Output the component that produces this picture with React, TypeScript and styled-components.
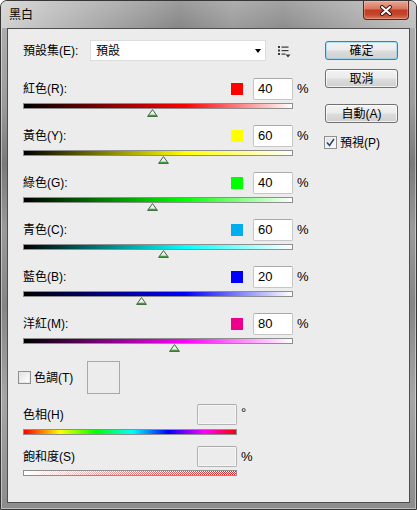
import React from 'react'
import styled, { createGlobalStyle } from 'styled-components'

const GlobalStyle = createGlobalStyle`
  html, body { margin: 0; padding: 0; }
  body {
    width: 417px;
    height: 510px;
    overflow: hidden;
    background: #ffffff;
    font-family: "Liberation Sans", "Noto Sans CJK TC", sans-serif;
  }
`

const FONT = `"Liberation Sans", "Noto Sans CJK TC", sans-serif`

const Window = styled.div`
  width: 417px;
  height: 510px;
  box-sizing: border-box;
  display: flex;
  flex-direction: column;
  padding: 0 6px 6px;
  border: 1px solid #363636;
  border-radius: 7px 7px 0 0;
  background: linear-gradient(to bottom, #b4b4b4 0%, #9c9c9c 20%, #7a7a7a 32%, #9a9a9a 45%, #858585 60%, #a6a6a6 78%, #8c8c8c 100%);
  box-shadow: inset 0 0 0 1px rgba(255, 255, 255, 0.45);
`

const TitleBar = styled.div`
  height: 27px;
  margin: 0 -6px;
  padding: 0 7px;
  display: flex;
  align-items: center;
  border-radius: 6px 6px 0 0;
  background:
    linear-gradient(to bottom, rgba(255, 255, 255, 0.18), rgba(255, 255, 255, 0)),
    linear-gradient(to right, #d2d2d2 0%, #bcbcbc 12%, #a2a2a2 28%, #878787 43%, #9c9c9c 56%, #8e8e8e 68%, #a9a9a9 85%, #c0c0c0 100%);
`

const Title = styled.span`
  font: 12px/14px ${FONT};
  color: #000;
  margin-left: 1px;
`

const CloseButton = styled.div`
  margin-left: auto;
  align-self: flex-start;
  width: 46px;
  height: 19px;
  box-sizing: border-box;
  border: 1px solid #5a2418;
  border-top: none;
  border-radius: 0 0 4px 4px;
  display: flex;
  align-items: center;
  justify-content: center;
  background: linear-gradient(to bottom, #e9a896 0%, #d9775f 42%, #c23c24 52%, #c5452d 75%, #d9785c 100%);
  box-shadow: inset 0 0 0 1px rgba(255, 210, 190, 0.35);
`

const Client = styled.div`
  flex: 1;
  display: flex;
  padding: 11px 0 0 15px;
  background: #ececec;
  border: 1px solid #4e4e4e;
`

const LeftCol = styled.div`
  width: 287px;
  display: flex;
  flex-direction: column;
`

const RightCol = styled.div`
  width: 73px;
  margin-left: 15px;
  padding-top: 1px;
  display: flex;
  flex-direction: column;
`

const PresetRow = styled.div`
  height: 21px;
  display: flex;
  align-items: center;
`

const Label = styled.span<{ $width?: number }>`
  font: 12px/16px ${FONT};
  color: #000;
  white-space: nowrap;
  ${p => (p.$width ? `width: ${p.$width}px;` : 'flex: 1;')}
`

const Select = styled.div`
  width: 176px;
  height: 21px;
  box-sizing: border-box;
  border: 1px solid #dcdcdc;
  background: #fff;
  padding: 0 4px 0 5px;
  display: flex;
  align-items: center;
  justify-content: space-between;
  font: 12px/16px ${FONT};
  color: #000;
`

const Caret = styled.span`
  width: 0;
  height: 0;
  border-left: 3.5px solid transparent;
  border-right: 3.5px solid transparent;
  border-top: 4px solid #000;
`

const ListIcon = styled.span`
  margin-left: 12px;
  display: flex;
  margin-top: 3px;
`

const SliderList = styled.div`
  margin-top: 17px;
  display: flex;
  flex-direction: column;
`

const SliderRow = styled.div`
  height: 47px;
  display: flex;
  flex-direction: column;
`

const ValueLine = styled.div<{ $h?: number }>`
  height: ${p => p.$h ?? 22}px;
  display: flex;
  align-items: center;
`

const Swatch = styled.span<{ $color: string }>`
  width: 12px;
  height: 12px;
  margin-right: 10px;
  background: ${p => p.$color};
`

const NumberBox = styled.div<{ $disabled?: boolean; $h?: number }>`
  width: 40px;
  height: ${p => p.$h ?? 22}px;
  box-sizing: border-box;
  border: 1px solid ${p => (p.$disabled ? '#b4b4b4' : '#c6c6c6')};
  border-top-color: ${p => (p.$disabled ? '#a9a9a9' : '#a9a9a9')};
  border-radius: 2px;
  background: ${p => (p.$disabled ? '#ececec' : '#fff')};
  box-shadow: ${p => (p.$disabled ? 'inset 0 0 0 1px #f6f6f6' : 'none')};
  padding-left: 4px;
  font: 13px/20px ${FONT};
  color: #000;
`

const Unit = styled.span<{ $h?: number }>`
  width: 13px;
  margin-left: 4px;
  align-self: flex-start;
  font: 13px/${p => p.$h ?? 22}px ${FONT};
  color: #000;
`

const Track = styled.div<{ $bg: string; $w: number; $h: number; $gap: number }>`
  position: relative;
  width: ${p => p.$w}px;
  height: ${p => p.$h}px;
  margin-top: ${p => p.$gap}px;
  box-sizing: border-box;
  border: 1px solid #8e8e8e;
  background: ${p => p.$bg};
`

const Thumb = styled.span`
  position: absolute;
  top: 5px;
  width: 11px;
  height: 8px;
  display: flex;
`

const TintRow = styled.div`
  margin-top: 1px;
  height: 33px;
  display: flex;
  align-items: center;
`

const Check = styled.span<{ $checked?: boolean }>`
  width: 13px;
  height: 13px;
  flex: none;
  box-sizing: border-box;
  border: 1px solid #8f8f8f;
  background: linear-gradient(135deg, #dedede 0%, #f4f4f4 60%, #ffffff 100%);
  box-shadow: inset 0 0 0 1px ${p => (p.$checked ? '#f4f4f4' : '#e8e8e8')};
  display: flex;
  align-items: center;
  justify-content: center;
`

const CheckLabel = styled.label<{ $offset?: number }>`
  display: flex;
  align-items: center;
  gap: 3px;
  margin-left: ${p => p.$offset ?? 0}px;
  font: 12px/16px ${FONT};
  color: #000;
`

const ColorWell = styled.span`
  width: 33px;
  height: 33px;
  margin-left: 14px;
  box-sizing: border-box;
  border: 1px solid #a8a8a8;
  background: #ececec;
`

const HSBlock = styled.div<{ $gap: number }>`
  margin-top: ${p => p.$gap}px;
  display: flex;
`

const HSMain = styled.div`
  width: 214px;
  display: flex;
  flex-direction: column;
`

const Button = styled.button<{ $default?: boolean; $gap?: number }>`
  width: 73px;
  height: 19px;
  margin: ${p => p.$gap ?? 0}px 0 0;
  padding: 0;
  box-sizing: border-box;
  border: 1px solid ${p => (p.$default ? '#3c7fb1' : '#707070')};
  border-radius: 3px;
  background: linear-gradient(to bottom, #f3f3f3 0%, #ebebeb 48%, #dddddd 52%, #cfcfcf 100%);
  box-shadow: inset 0 0 0 1px ${p => (p.$default ? 'rgba(120, 210, 250, 0.55)' : 'rgba(255, 255, 255, 0.7)')};
  font: 12px/16px ${FONT};
  color: #000;
`

const PreviewRow = styled.div`
  margin-top: 13px;
  height: 13px;
  display: flex;
  align-items: center;
`

const sliders = [
  { label: '紅色(R):', value: 40, swatch: '#ff0000', color: '#ff0000' },
  { label: '黃色(Y):', value: 60, swatch: '#ffff00', color: '#ffff00' },
  { label: '綠色(G):', value: 40, swatch: '#00ff00', color: '#00ff00' },
  { label: '青色(C):', value: 60, swatch: '#00aeef', color: '#00ffff' },
  { label: '藍色(B):', value: 20, swatch: '#0000ff', color: '#0000ff' },
  { label: '洋紅(M):', value: 80, swatch: '#ec008c', color: '#ff00ff' },
]

const TRACK_W = 270

function ThumbIcon() {
  return (
    <svg width="11" height="8" viewBox="0 0 11 8">
      <defs>
        <linearGradient id="tg" x1="0" y1="0" x2="0" y2="1">
          <stop offset="0" stopColor="#ffffff" />
          <stop offset="0.6" stopColor="#e6f3e6" />
          <stop offset="1" stopColor="#4fa64f" />
        </linearGradient>
      </defs>
      <path d="M5.5 0.6 L10.4 7.4 L0.6 7.4 Z" fill="url(#tg)" stroke="#3f5f3f" strokeWidth="1" />
      <path d="M2.2 6.6 H8.8" stroke="#3d9a3d" strokeWidth="1.2" />
    </svg>
  )
}

function PresetListIcon() {
  return (
    <svg width="13" height="12" viewBox="0 0 13 12">
      <g fill="#3a3a3a">
        <rect x="0" y="0" width="2" height="2" />
        <rect x="3.5" y="0.5" width="7" height="1.2" />
        <rect x="0" y="3.5" width="2" height="2" />
        <rect x="3.5" y="4" width="7" height="1.2" />
        <rect x="0" y="7" width="2" height="2" />
        <rect x="3.5" y="7.5" width="4" height="1.2" />
        <path d="M7.5 8.5 H12.5 L10 11.5 Z" />
      </g>
    </svg>
  )
}

function SliderControl({ label, value, swatch, color }: { label: string; value: number; swatch: string; color: string }) {
  const frac = (value + 200) / 500
  return (
    <SliderRow>
      <ValueLine>
        <Label>{label}</Label>
        <Swatch $color={swatch} />
        <NumberBox>{value}</NumberBox>
        <Unit>%</Unit>
      </ValueLine>
      <Track
        $w={TRACK_W}
        $h={6}
        $gap={3}
        $bg={`linear-gradient(to right, #000 0%, ${color} 60%, #fff 100%)`}
      >
        <Thumb style={{ left: frac * TRACK_W - 6.5 }}>
          <ThumbIcon />
        </Thumb>
      </Track>
    </SliderRow>
  )
}

export default function App() {
  return (
    <>
      <GlobalStyle />
      <Window>
        <TitleBar>
          <Title>黑白</Title>
          <CloseButton>
            <svg width="14" height="11" viewBox="0 0 14 11">
              <path d="M3 2 L11 9 M11 2 L3 9" stroke="#3a1a12" strokeWidth="4" strokeLinecap="round" />
              <path d="M3 2 L11 9 M11 2 L3 9" stroke="#ffffff" strokeWidth="2" strokeLinecap="round" />
            </svg>
          </CloseButton>
        </TitleBar>
        <Client>
          <LeftCol>
            <PresetRow>
              <Label $width={67}>預設集(E):</Label>
              <Select>
                <span>預設</span>
                <Caret />
              </Select>
              <ListIcon>
                <PresetListIcon />
              </ListIcon>
            </PresetRow>
            <SliderList>
              {sliders.map(s => (
                <SliderControl key={s.label} {...s} />
              ))}
            </SliderList>
            <TintRow>
              <CheckLabel $offset={-5}>
                <Check />
                色調(T)
              </CheckLabel>
              <ColorWell />
            </TintRow>
            <HSBlock $gap={10}>
              <HSMain>
                <ValueLine $h={21}>
                  <Label>色相(H)</Label>
                  <NumberBox $disabled $h={21} />
                </ValueLine>
                <Track
                  $w={214}
                  $h={6}
                  $gap={4}
                  $bg="linear-gradient(to right, #f00 0%, #ff0 17%, #0f0 34%, #0ff 51%, #00f 68%, #f0f 85%, #f00 100%)"
                />
              </HSMain>
              <Unit $h={17}>°</Unit>
            </HSBlock>
            <HSBlock $gap={11}>
              <HSMain>
                <ValueLine $h={21}>
                  <Label>飽和度(S)</Label>
                  <NumberBox $disabled $h={21} />
                </ValueLine>
                <Track
                  $w={214}
                  $h={6}
                  $gap={3}
                  $bg="linear-gradient(to right, rgba(255,255,255,1) 0%, rgba(255,255,255,0.3) 60%, rgba(255,255,255,0) 100%), repeating-conic-gradient(#e22 0 25%, #fff 0 50%) 0 0 / 2px 2px"
                />
              </HSMain>
              <Unit $h={21}>%</Unit>
            </HSBlock>
          </LeftCol>
          <RightCol>
            <Button $default>確定</Button>
            <Button $gap={9}>取消</Button>
            <Button $gap={16}>自動(A)</Button>
            <PreviewRow>
              <CheckLabel $offset={-1}>
                <Check $checked>
                  <svg width="9" height="9" viewBox="0 0 9 9">
                    <path d="M1 4.5 L3.5 7.5 L8 1" fill="none" stroke="#2a4a7a" strokeWidth="1.6" />
                  </svg>
                </Check>
                預視(P)
              </CheckLabel>
            </PreviewRow>
          </RightCol>
        </Client>
      </Window>
    </>
  )
}
